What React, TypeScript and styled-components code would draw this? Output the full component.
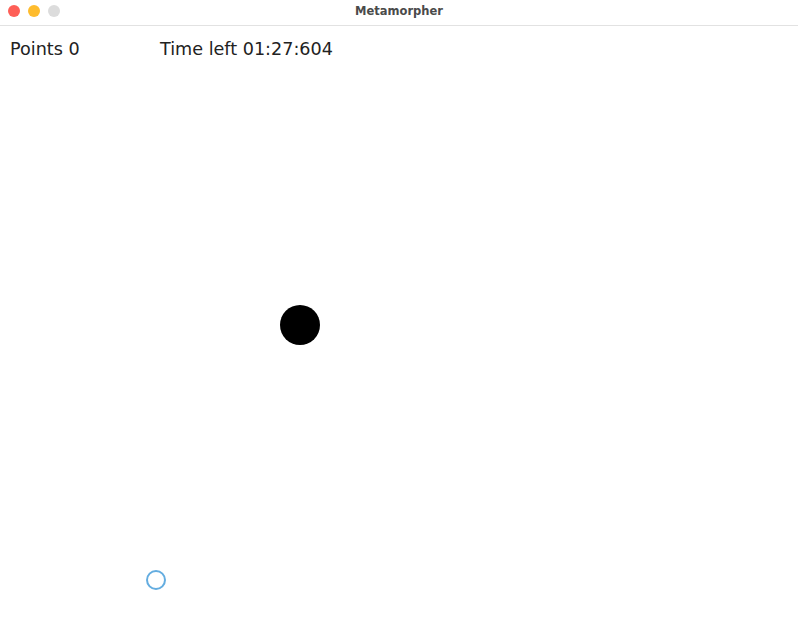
import { FC } from 'react';
import styled, { createGlobalStyle } from 'styled-components';

const GlobalStyle = createGlobalStyle`
    html, body {
        margin: 0;
        padding: 0;
        background: #ffffff;
    }
`;

const Window = styled.div`
    width: 798px;
    height: 620px;
    display: flex;
    flex-direction: column;
    background: #ffffff;
    overflow: hidden;
`;

const TitleBar = styled.div`
    height: 25px;
    flex: none;
    display: flex;
    align-items: center;
    border-bottom: 1px solid #e2e2e2;
    background: #ffffff;
`;

const Lights = styled.div`
    display: flex;
    gap: 8px;
    padding-left: 8px;
    margin-top: -3px;
`;

const Light = styled.span<{ $color: string }>`
    width: 12px;
    height: 12px;
    border-radius: 50%;
    background: ${p => p.$color};
`;

const Title = styled.div`
    flex: 1;
    text-align: center;
    margin-left: -60px;
    margin-top: -3px;
    font-family: 'DejaVu Sans', sans-serif;
    font-weight: bold;
    font-size: 11.5px;
    color: #4a4a4a;
`;

const Board = styled.div`
    flex: 1;
    position: relative;
`;

const Hud = styled.div`
    display: flex;
    padding: 13px 0 0 10px;
    font-family: 'DejaVu Sans', sans-serif;
    font-size: 17.6px;
    color: #222222;
`;

const HudItem = styled.span<{ $width?: number }>`
    width: ${p => (p.$width ? `${p.$width}px` : 'auto')};
`;

const Ball = styled.div`
    position: absolute;
    left: 280px;
    top: 279px;
    width: 40px;
    height: 40px;
    border-radius: 50%;
    background: #000000;
`;

const Target = styled.div`
    position: absolute;
    left: 146px;
    top: 544px;
    width: 16px;
    height: 16px;
    border-radius: 50%;
    border: 2px solid #64ade0;
`;

const App: FC = () => {
    return (
        <Window>
            <GlobalStyle />
            <TitleBar>
                <Lights>
                    <Light $color="#fe5f57" />
                    <Light $color="#febc2e" />
                    <Light $color="#dcdcdc" />
                </Lights>
                <Title>Metamorpher</Title>
            </TitleBar>
            <Board>
                <Hud>
                    <HudItem $width={150}>Points 0</HudItem>
                    <HudItem>Time left 01:27:604</HudItem>
                </Hud>
                <Ball />
                <Target />
            </Board>
        </Window>
    );
};

export default App;
